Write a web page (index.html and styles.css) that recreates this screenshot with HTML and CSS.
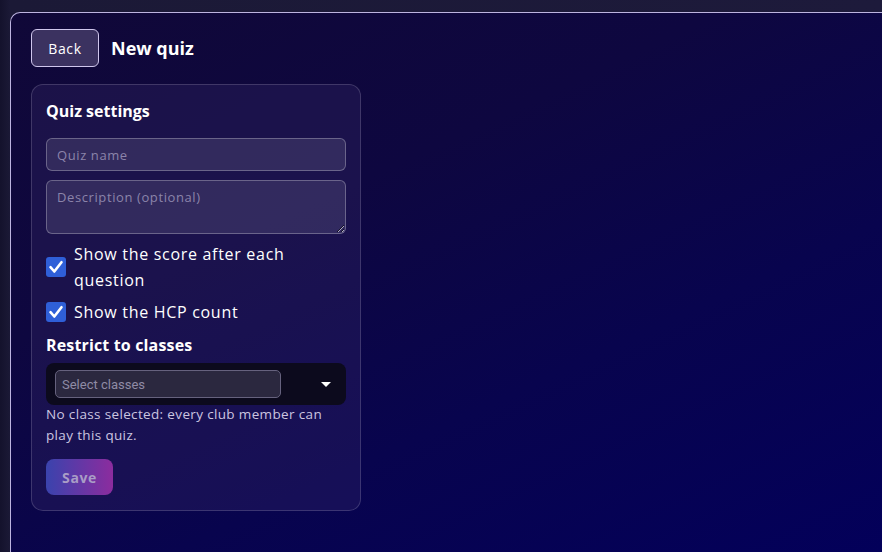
FILE: index.html
```html
<!DOCTYPE html>
<html lang="en">
<head>
<meta charset="utf-8">
<title>New quiz</title>
<link rel="stylesheet" href="styles.css">
</head>
<body>
<div class="frame">
  <header class="top">
    <button class="back">Back</button>
    <h1 class="title">New quiz</h1>
  </header>
  <section class="card">
    <h2 class="card-title">Quiz settings</h2>
    <input class="field" type="text" placeholder="Quiz name">
    <textarea class="field area" placeholder="Description (optional)"></textarea>
    <label class="check">
      <span class="box"><svg viewBox="0 0 20 20" width="20" height="20"><path d="M4.5 10.2 L8.3 14.5 L15.5 5.2" fill="none" stroke="#fff" stroke-width="2.6" stroke-linecap="round" stroke-linejoin="round"/></svg></span>
      <span class="check-text">Show the score after each question</span>
    </label>
    <label class="check">
      <span class="box"><svg viewBox="0 0 20 20" width="20" height="20"><path d="M4.5 10.2 L8.3 14.5 L15.5 5.2" fill="none" stroke="#fff" stroke-width="2.6" stroke-linecap="round" stroke-linejoin="round"/></svg></span>
      <span class="check-text">Show the HCP count</span>
    </label>
    <h3 class="sub">Restrict to classes</h3>
    <div class="select">
      <input class="select-input" type="text" placeholder="Select classes">
      <span class="caret"></span>
    </div>
    <p class="help">No class selected: every club member can play this quiz.</p>
    <button class="save" disabled>Save</button>
  </section>
</div>
</body>
</html>
```
FILE: styles.css
```css
* { box-sizing: border-box; }
html, body { height: 100%; }
body {
  margin: 0;
  background: linear-gradient(90deg, #14122c 0px, #1b1936 10px, #1d1a3b 100%);
  font-family: "Open Sans", "DejaVu Sans", sans-serif;
  color: #fff;
  overflow: hidden;
}
.frame {
  margin: 12px 0 0 10px;
  min-height: calc(100% - 12px);
  border-top: 1px solid #bdb4e0;
  border-left: 1px solid #bdb4e0;
  border-top-left-radius: 10px;
  background: linear-gradient(155deg, #100838 0%, #0e0740 35%, #08044e 65%, #03005a 100%);
  padding: 16px 0 0 20px;
}
.top {
  display: flex;
  align-items: center;
  gap: 12px;
}
.back {
  width: 68px;
  height: 38px;
  border: 1px solid #cfc6ec;
  border-radius: 6px;
  background: #3b3260;
  color: #fff;
  font-family: inherit;
  font-size: 14px;
  font-weight: 500;
  letter-spacing: 0.6px;
  padding: 0;
}
.title {
  margin: 0;
  font-size: 18px;
  font-weight: 700;
}
.card {
  margin-top: 17px;
  width: 330px;
  border: 1px solid rgba(255,255,255,0.16);
  border-radius: 12px;
  background: rgba(60,45,110,0.28);
  padding: 14px 14px 15px;
  display: flex;
  flex-direction: column;
}
.card-title {
  margin: 0 0 15px;
  font-size: 16px;
  font-weight: 700;
  line-height: 24px;
}
.field {
  display: block;
  flex: none;
  width: 300px;
  height: 33px;
  border: 1px solid rgba(255,255,255,0.28);
  border-radius: 6px;
  background: rgba(255,255,255,0.1);
  color: #fff;
  font-family: inherit;
  font-size: 13px;
  letter-spacing: 0.6px;
  padding: 0 10px;
  margin: 0 0 9px;
  outline: none;
}
.field::placeholder { color: #8b84aa; }
.area {
  height: 54px;
  padding: 7px 10px;
  resize: vertical;
  margin-bottom: 7px;
}
.check {
  display: flex;
  align-items: center;
  gap: 8px;
  font-size: 16px;
  font-weight: 500;
  line-height: 26px;
  letter-spacing: 0.7px;
  margin-bottom: 6px;
}
.box {
  flex: none;
  width: 20px;
  height: 20px;
  border-radius: 3px;
  background: #2f5fd8;
  display: flex;
}
.check-text { width: 272px; }
.sub {
  margin: 2px 0 6px;
  font-size: 16px;
  font-weight: 700;
  line-height: 24px;
  letter-spacing: 0.15px;
}
.select {
  flex: none;
  height: 42px;
  background: #0c0a1d;
  border-radius: 8px;
  display: flex;
  align-items: center;
  padding: 0 9px;
}
.select-input {
  width: 226px;
  height: 28px;
  border: 1px solid #66627e;
  border-radius: 5px;
  background: #2b283f;
  font-family: Roboto, sans-serif;
  font-size: 13px;
  color: #fff;
  padding: 0 6px;
  outline: none;
}
.select-input::placeholder { color: #8f8ba5; }
.caret {
  margin-left: auto;
  margin-right: 6px;
  width: 0;
  height: 0;
  border-left: 5px solid transparent;
  border-right: 5px solid transparent;
  border-top: 5px solid #fff;
}
.help {
  margin: -1px 0 0;
  font-size: 13.5px;
  line-height: 21px;
  letter-spacing: 0.35px;
  color: #cbc5e0;
}
.save {
  align-self: flex-start;
  margin-top: 13px;
  width: 67px;
  height: 36px;
  border: none;
  border-radius: 8px;
  background: linear-gradient(90deg, #3a43ad, #8c2c9e);
  color: #a99dc6;
  font-family: inherit;
  font-size: 14px;
  font-weight: 700;
  letter-spacing: 0.6px;
  padding: 0;
}
```
